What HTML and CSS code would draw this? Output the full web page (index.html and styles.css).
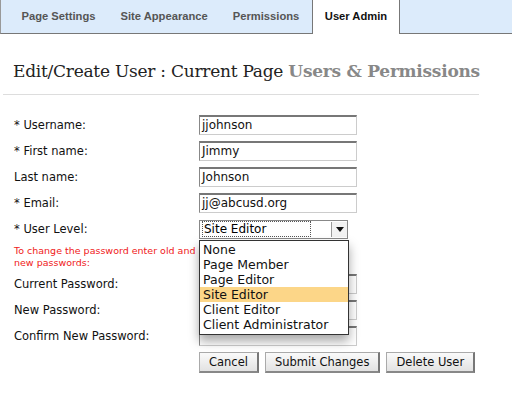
FILE: index.html
```html
<!DOCTYPE html>
<html>
<head>
<meta charset="utf-8">
<link rel="stylesheet" href="styles.css">
</head>
<body>
<div class="tabs">
  <div class="tab">Page Settings</div>
  <div class="tab">Site Appearance</div>
  <div class="tab">Permissions</div>
  <div class="tab active">User Admin</div>
</div>
<h1 class="title">Edit/Create User : Current Page <span class="sub">Users &amp; Permissions</span></h1>
<div class="rule"></div>
<div class="form">
  <div class="row"><div class="label">* Username:</div><div class="field">jjohnson</div></div>
  <div class="row"><div class="label">* First name:</div><div class="field">Jimmy</div></div>
  <div class="row"><div class="label">Last name:</div><div class="field">Johnson</div></div>
  <div class="row"><div class="label">* Email:</div><div class="field">jj@abcusd.org</div></div>
  <div class="row"><div class="label">* User Level:</div>
    <div class="selwrap">
      <div class="select"><span class="seltext">Site Editor</span><span class="arrow"></span></div>
      <div class="menu">
        <div class="opt">None</div>
        <div class="opt">Page Member</div>
        <div class="opt">Page Editor</div>
        <div class="opt sel">Site Editor</div>
        <div class="opt">Client Editor</div>
        <div class="opt">Client Administrator</div>
      </div>
    </div>
  </div>
  <div class="note">To change the password enter old and<br>new passwords:</div>
  <div class="row"><div class="label">Current Password:</div><div class="field"></div></div>
  <div class="row"><div class="label">New Password:</div><div class="field"></div></div>
  <div class="row"><div class="label">Confirm New Password:</div><div class="field"></div></div>
  <div class="buttons">
    <div class="btn">Cancel</div>
    <div class="btn">Submit Changes</div>
    <div class="btn">Delete User</div>
  </div>
</div>
</body>
</html>
```
FILE: styles.css
```css
body { margin: 0; background: #fff; font-family: "DejaVu Sans", Verdana, sans-serif; }
.tabs { display: flex; height: 33px; background: #dcebfb; border-bottom: 1px solid #777; border-left: 1px solid #999; padding-left: 8px; }
.tab { font-family: "Liberation Sans", Arial, sans-serif; font-weight: bold; font-size: 11.2px; color: #555; padding: 0 12.5px; line-height: 33px; }
.tab.active { background: #fff; color: #111; border-left: 1px solid #777; border-right: 1px solid #777; height: 34px; padding: 0 12px; margin-left: 0; }
.title { font-family: "DejaVu Serif", Georgia, serif; font-weight: normal; font-size: 17px; color: #222; margin: 25px 0 0 13px; line-height: 24px; letter-spacing: -0.25px; }
.sub { font-weight: bold; color: #888; }
.rule { height: 1px; background: #ddd; margin: 11px 33px 0 3px; }
.form { padding: 20px 0 0 14px; position: relative; }
.row { display: flex; align-items: center; height: 20px; margin-bottom: 6px; }
.label { width: 185px; font-size: 11.5px; color: #111; }
.field { width: 154px; height: 17px; border: 1px solid #ccc; border-top: 2px solid #777; border-left: 1px solid #888; font-family: "DejaVu Sans", sans-serif; font-size: 12px; line-height: 17px; padding-left: 2px; color: #111; background: #fff; }
.selwrap { position: relative; }
.select { width: 145px; height: 17px; border: 1px solid #888; display: flex; align-items: center; justify-content: space-between; background: #fff; padding: 0 0 0 2px; }
.seltext { font-size: 12px; border: 1px dotted #555; padding: 0 44px 0 1px; line-height: 14px; }
.arrow { width: 15px; height: 15px; border-left: 1px solid #999; position: relative; background: #f2f2f2; }
.arrow::after { content: ""; position: absolute; left: 4px; top: 5px; border-left: 4px solid transparent; border-right: 4px solid transparent; border-top: 5px solid #111; }
.menu { position: absolute; left: 0; top: 20px; width: 148px; border: 1px solid #333; background: #fff; box-shadow: 0 6px 10px rgba(0,0,0,0.35); z-index: 2; padding: 1px 0 2px; }
.opt { font-size: 12.5px; line-height: 15px; padding-left: 3px; color: #111; }
.opt.sel { background: #fcd688; }
.note { font-size: 9.5px; color: #f02020; line-height: 12px; margin: 2px 0 5px 0; }
.buttons { display: flex; gap: 6px; margin-left: 185px; margin-top: 5px; }
.btn { font-size: 11.5px; padding: 2px 9px; border: 1px solid #aaa; border-right: 2px solid #777; border-bottom: 2px solid #888; background: linear-gradient(#fafafa, #e2e2e2); color: #111; }
```
